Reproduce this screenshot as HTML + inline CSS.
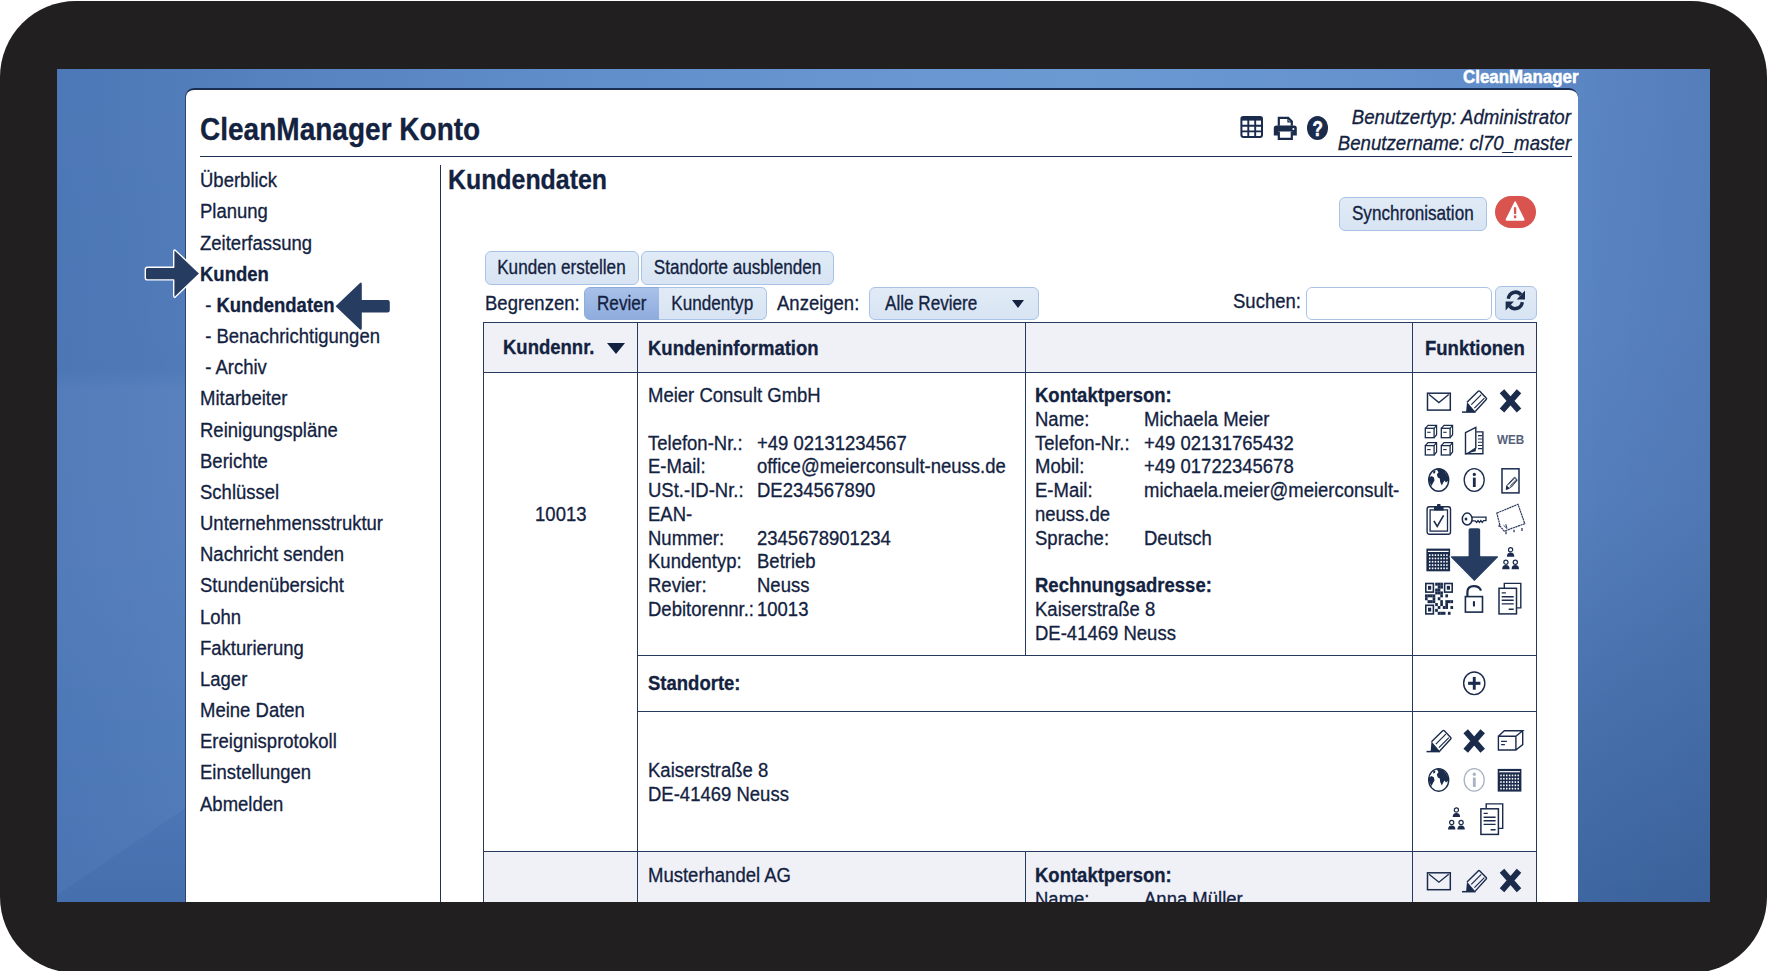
<!DOCTYPE html>
<html lang="de">
<head>
<meta charset="utf-8">
<title>CleanManager Konto – Kundendaten</title>
<style>
html,body{margin:0;padding:0;background:#fff;}
body{width:1767px;height:971px;overflow:hidden;position:relative;font-family:"Liberation Sans",Arial,Helvetica,sans-serif;color:#13223f;font-size:20px;line-height:24px;-webkit-text-stroke-width:.3px;}
#frame{position:absolute;left:0;top:1px;width:1767px;height:972px;background:#221f20;border-radius:76px/76px;}
#screen{position:absolute;left:57px;top:69px;width:1653px;height:833px;overflow:hidden;
 background:linear-gradient(90deg,#4d78b7 0%,#527dbb 8%,#5682c0 13%,#5f8dc9 30%,#6996d0 50%,#6b99d2 62%,#6592cd 80%,#5d89c6 90%,#5985c2 93%,#5782bf 100%);}
#bgl{position:absolute;left:0;top:0;width:130px;height:833px;background:linear-gradient(180deg,rgba(255,255,255,0) 0%,rgba(0,0,40,.02) 36%,rgba(255,255,255,.035) 38.5%,rgba(255,255,255,.03) 60%,rgba(255,255,255,0) 80%,rgba(0,0,60,.04) 100%);}
#bgl i{position:absolute;left:0;top:0;width:130px;height:833px;background:linear-gradient(180deg,#4b75b4 738px,#466fae 833px);clip-path:polygon(0 826px,130px 738px,130px 833px,0 833px);}
#bgr{position:absolute;left:1521px;top:0;width:132px;height:833px;background:linear-gradient(180deg,rgba(43,80,136,0) 0%,rgba(43,80,136,.03) 30%,rgba(43,80,136,.12) 52%,rgba(43,80,136,.36) 75%,rgba(43,80,136,.6) 100%);}
#bgr i{position:absolute;left:0;top:0;right:0;bottom:0;background:linear-gradient(90deg,rgba(255,255,255,.0),rgba(0,0,40,.03));}
#brand{position:absolute;left:1406px;top:-2.5px;-webkit-text-stroke-width:.5px;width:118px;color:#fff;font-weight:bold;font-size:17.8px;line-height:20px;white-space:nowrap;}
#panel{position:absolute;left:128.3px;top:19px;width:1393.2px;height:900px;background:#fff;border-radius:9px 9px 0 0;border-top:2px solid #1a2d52;border-left:1px solid #2c4473;box-sizing:border-box;}
#app{position:absolute;left:-57px;top:-69px;width:1767px;height:971px;}
.a{position:absolute;white-space:nowrap;}
.btn.on{background:linear-gradient(180deg,#a9c1e8,#8facde);border-color:#8facde;}
.t{display:inline-block;transform:scale(.925,1.05);transform-origin:0 50%;white-space:nowrap;}
.tr{display:inline-block;transform:scale(.925,1.05);transform-origin:100% 50%;white-space:nowrap;}
.tc{display:inline-block;transform:scale(.925,1.05);transform-origin:50% 50%;white-space:nowrap;}
b,.b{font-weight:bold;}
.line{position:absolute;background:#1f3156;}
.btn{position:absolute;box-sizing:border-box;border:1px solid #a9c3e6;border-radius:6px;background:linear-gradient(180deg,#e1ebf7,#d8e4f3);text-align:center;font-size:18.5px;line-height:32px;white-space:nowrap;}
</style>
</head>
<body>
<div id="frame"></div>
<div id="screen"><div id="bgl"><i></i></div><div id="bgr"><i></i></div>
<div id="brand"><span class="t" style="transform:scale(.95,1.05)">CleanManager</span></div>
<div id="panel"></div>
<div id="app">
<div class="a" id="title" style="left:199.6px;top:111.8px;font-size:30px;line-height:36px;font-weight:bold"><span class="t" style="transform:scale(.934,1.05)">CleanManager Konto</span></div>
<div class="a" style="right:196px;top:105.2px;text-align:right;font-style:italic;line-height:25.6px"><span class="tr" style="transform:scale(.933,1.05)">Benutzertyp: Administrator</span><br><span class="tr" style="transform:scale(.933,1.05)">Benutzername: cl70_master</span></div>
<div class="line" style="left:200px;top:156px;width:1372px;height:1px"></div>
<div class="line" style="left:440px;top:165px;width:1px;height:740px"></div>
<div class="a" id="side" style="left:200px;top:165.2px;line-height:31.178px"><div><span class="t">Überblick</span></div><div><span class="t">Planung</span></div><div><span class="t">Zeiterfassung</span></div><div><span class="t"><b>Kunden</b></span></div><div><span class="t">&nbsp;- <b>Kundendaten</b></span></div><div><span class="t">&nbsp;- Benachrichtigungen</span></div><div><span class="t">&nbsp;- Archiv</span></div><div><span class="t">Mitarbeiter</span></div><div><span class="t">Reinigungspläne</span></div><div><span class="t">Berichte</span></div><div><span class="t">Schlüssel</span></div><div><span class="t">Unternehmensstruktur</span></div><div><span class="t">Nachricht senden</span></div><div><span class="t">Stundenübersicht</span></div><div><span class="t">Lohn</span></div><div><span class="t">Fakturierung</span></div><div><span class="t">Lager</span></div><div><span class="t">Meine Daten</span></div><div><span class="t">Ereignisprotokoll</span></div><div><span class="t">Einstellungen</span></div><div><span class="t">Abmelden</span></div></div>
<div class="a" style="left:447.9px;top:163.6px;font-size:27px;line-height:32px;font-weight:bold"><span class="t" style="transform:scale(.9215,1.05)">Kundendaten</span></div>
<div class="btn " style="left:1339px;top:196.5px;width:148px;height:34.5px;line-height:32.5px;"><span class="tc">Synchronisation</span></div>
<div class="a" id="alert" style="left:1495px;top:196.1px;width:41px;height:32.2px;border-radius:16px;background:#d9534f"></div>
<div class="btn " style="left:485px;top:251px;width:153.5px;height:33.5px;line-height:31.5px;"><span class="tc">Kunden erstellen</span></div>
<div class="btn " style="left:641px;top:251px;width:193px;height:33.5px;line-height:31.5px;"><span class="tc">Standorte ausblenden</span></div>
<div class="a" style="left:485px;top:291px;"><span class="t">Begrenzen:</span></div>
<div class="btn on" style="left:584px;top:286.5px;width:76px;height:33.5px;line-height:31.5px;border-radius:6px 0 0 6px;"><span class="tc">Revier</span></div>
<div class="btn " style="left:659px;top:286.5px;width:107.5px;height:33.5px;line-height:31.5px;border-radius:0 6px 6px 0;border-left:none;"><span class="tc">Kundentyp</span></div>
<div class="a" style="left:777px;top:291px;"><span class="t">Anzeigen:</span></div>
<div class="btn" style="left:869px;top:286.5px;width:170px;height:33.5px;line-height:31px;text-align:left;padding-left:15px"><span class="t">Alle Reviere</span></div>
<div class="a" style="left:1012px;top:299.7px;width:0;height:0;border-left:6.5px solid transparent;border-right:6.5px solid transparent;border-top:8px solid #13223f"></div>
<div class="a" style="left:1233px;top:289px;"><span class="t">Suchen:</span></div>
<div class="a" style="left:1305.5px;top:286.5px;width:186px;height:33.5px;box-sizing:border-box;border:1px solid #a9c3e6;border-radius:6px;background:#fff"></div>
<div class="btn " style="left:1495px;top:286px;width:41.5px;height:34px;line-height:32px;"><span class="tc"></span></div>
<div class="a" style="left:482.7px;top:322px;width:1054.3px;height:49.89999999999998px;background:#f0f0f7"></div>
<div class="a" style="left:482.7px;top:851.1px;width:1054.3px;height:53.89999999999998px;background:#f0f0f7"></div>
<div class="a" style="left:482.7px;top:321.9px;width:1054.3px;height:1.2px;background:#263a5e"></div>
<div class="a" style="left:482.7px;top:371.79999999999995px;width:1054.3px;height:1.2px;background:#263a5e"></div>
<div class="a" style="left:637.2px;top:654.6px;width:899.8px;height:1.2px;background:#263a5e"></div>
<div class="a" style="left:637.2px;top:710.8px;width:899.8px;height:1.2px;background:#263a5e"></div>
<div class="a" style="left:482.7px;top:851.0px;width:1054.3px;height:1.2px;background:#263a5e"></div>
<div class="a" style="left:482.59999999999997px;top:322px;width:1.2px;height:583px;background:#263a5e"></div>
<div class="a" style="left:637.1px;top:322px;width:1.2px;height:583px;background:#263a5e"></div>
<div class="a" style="left:1535.9px;top:322px;width:1.2px;height:583px;background:#263a5e"></div>
<div class="a" style="left:1411.8000000000002px;top:322px;width:1.2px;height:583px;background:#263a5e"></div>
<div class="a" style="left:1024.8000000000002px;top:322px;width:1.2px;height:332.70000000000005px;background:#263a5e"></div>
<div class="a" style="left:1024.8000000000002px;top:851.1px;width:1.2px;height:53.89999999999998px;background:#263a5e"></div>
<div class="a" style="left:503px;top:334.5px;font-weight:bold"><span class="t">Kundennr.</span></div>
<div class="a" style="left:607px;top:343px;width:0;height:0;border-left:9.5px solid transparent;border-right:9.5px solid transparent;border-top:11px solid #13223f"></div>
<div class="a" style="left:647.6px;top:336px;font-weight:bold"><span class="t">Kundeninformation</span></div>
<div class="a" style="left:1424.5px;top:336px;font-weight:bold"><span class="t">Funktionen</span></div>
<div class="a" style="left:483px;top:502px;width:155px;text-align:center"><span class="tc">10013</span></div>
<div class="a" style="left:647.6px;top:383.0px;"><span class="t">Meier Consult GmbH</span></div>
<div class="a" style="left:647.6px;top:430.5px;"><span class="t">Telefon-Nr.:</span></div>
<div class="a" style="left:757px;top:430.5px;"><span class="t">+49 02131234567</span></div>
<div class="a" style="left:647.6px;top:454.25px;"><span class="t">E-Mail:</span></div>
<div class="a" style="left:757px;top:454.25px;"><span class="t">office@meierconsult-neuss.de</span></div>
<div class="a" style="left:647.6px;top:478.0px;"><span class="t">USt.-ID-Nr.:</span></div>
<div class="a" style="left:757px;top:478.0px;"><span class="t">DE234567890</span></div>
<div class="a" style="left:647.6px;top:501.75px;"><span class="t">EAN-</span></div>
<div class="a" style="left:647.6px;top:525.5px;"><span class="t">Nummer:</span></div>
<div class="a" style="left:757px;top:525.5px;"><span class="t">2345678901234</span></div>
<div class="a" style="left:647.6px;top:549.25px;"><span class="t">Kundentyp:</span></div>
<div class="a" style="left:757px;top:549.25px;"><span class="t">Betrieb</span></div>
<div class="a" style="left:647.6px;top:573.0px;"><span class="t">Revier:</span></div>
<div class="a" style="left:757px;top:573.0px;"><span class="t">Neuss</span></div>
<div class="a" style="left:647.6px;top:596.75px;"><span class="t">Debitorennr.:</span></div>
<div class="a" style="left:757px;top:596.75px;"><span class="t">10013</span></div>
<div class="a" style="left:1035px;top:383.0px;"><span class="t"><b>Kontaktperson:</b></span></div>
<div class="a" style="left:1035px;top:406.75px;"><span class="t">Name:</span></div>
<div class="a" style="left:1144px;top:406.75px;"><span class="t">Michaela Meier</span></div>
<div class="a" style="left:1035px;top:430.5px;"><span class="t">Telefon-Nr.:</span></div>
<div class="a" style="left:1144px;top:430.5px;"><span class="t">+49 02131765432</span></div>
<div class="a" style="left:1035px;top:454.25px;"><span class="t">Mobil:</span></div>
<div class="a" style="left:1144px;top:454.25px;"><span class="t">+49 01722345678</span></div>
<div class="a" style="left:1035px;top:478.0px;"><span class="t">E-Mail:</span></div>
<div class="a" style="left:1144px;top:478.0px;"><span class="t">michaela.meier@meierconsult-</span></div>
<div class="a" style="left:1035px;top:501.75px;"><span class="t">neuss.de</span></div>
<div class="a" style="left:1035px;top:525.5px;"><span class="t">Sprache:</span></div>
<div class="a" style="left:1144px;top:525.5px;"><span class="t">Deutsch</span></div>
<div class="a" style="left:1035px;top:573.0px;"><span class="t"><b>Rechnungsadresse:</b></span></div>
<div class="a" style="left:1035px;top:596.75px;"><span class="t">Kaiserstraße 8</span></div>
<div class="a" style="left:1035px;top:620.5px;"><span class="t">DE-41469 Neuss</span></div>
<div class="a" style="left:647.6px;top:671.3px;"><span class="t"><b>Standorte:</b></span></div>
<div class="a" style="left:647.6px;top:758px;"><span class="t">Kaiserstraße 8</span></div>
<div class="a" style="left:647.6px;top:782px;"><span class="t">DE-41469 Neuss</span></div>
<div class="a" style="left:647.6px;top:863.2px;"><span class="t">Musterhandel AG</span></div>
<div class="a" style="left:1035px;top:863.2px;"><span class="t"><b>Kontaktperson:</b></span></div>
<div class="a" style="left:1035px;top:886.95px;"><span class="t">Name:</span></div>
<div class="a" style="left:1144px;top:886.95px;"><span class="t">Anna Müller</span></div>
<svg class="a" style="left:0;top:0" width="1767" height="971" viewBox="0 0 1767 971" fill="none" stroke="#1a2b4c"><g transform="translate(1240.4 116.5)" ><rect x="1" y=".6" width="20.6" height="19.8" rx="1.8" fill="none" stroke-width="2"/><path d="M1 2.4H21.6" stroke-width="3.4"/><path d="M1 9.2H21.6M1 14.9H21.6M7.9 3V20.4M14.8 3V20.4" stroke-width="1.9"/></g><g transform="translate(1273.8 116.8)" ><path d="M5 9V1H14.4L18 4.6V9" fill="none" stroke-width="2.2"/><path d="M14.2 1V5H18" fill="none" stroke-width="1.3"/><path d="M2.6 8.6H20.4Q23 8.6 23 11.2V18.6H18.6V14.6H4.4V18.6H0V11.2Q0 8.6 2.6 8.6Z" stroke="none" fill="#1a2b4c"/><path d="M5 14.6V22H18V14.6" fill="none" stroke-width="2.2"/><circle cx="19.6" cy="12.2" r="1" fill="#fff" stroke="none"/></g><g transform="translate(1307.0 116.0)" ><ellipse cx="10.5" cy="12" rx="10.5" ry="12" stroke="none" fill="#1a2b4c"/><text transform="translate(10.6 19.6) scale(.92 1.22)" x="0" y="0" text-anchor="middle" font-family="Liberation Sans, Arial, sans-serif" font-weight="bold" font-size="18.5" fill="#fff" stroke="#fff" stroke-width=".5">?</text></g><g transform="translate(1505.3 200.7) scale(.9 1.05)" ><g transform="translate(0.0 0.0)" ><path d="M10 1.2Q10.9 -.2 11.8 1.2L21.2 17.4Q22 19 20.2 19H1.6Q-.2 19 .6 17.4Z" fill="#fff" stroke="none"/><rect x="9.6" y="6.2" width="2.6" height="6.4" fill="#d9534f" stroke="none"/><rect x="9.6" y="14" width="2.6" height="2.7" fill="#d9534f" stroke="none"/></g></g><g transform="translate(1505.2 289.3) scale(1.01 1.1)" ><g transform="translate(0.0 0.0)" ><path d="M3 8.6A7.3 7.3 0 0 1 15.6 5" fill="none" stroke-width="3.3"/><path d="M19.6 1V9.2H11.4Z" stroke="none" fill="#1a2b4c"/><path d="M17 11.6A7.3 7.3 0 0 1 4.4 15.2" fill="none" stroke-width="3.3"/><path d="M.4 19.2V11H8.6Z" stroke="none" fill="#1a2b4c"/></g></g><g transform="translate(1426.7 392.4)" ><rect x=".8" y=".8" width="22.8" height="16.9" fill="none" stroke-width="1.5"/><path d="M2.4 2.2L12.2 10.2L22 2.2" fill="none" stroke-width="1.3"/></g><g transform="translate(1462.0 390.5)" ><path d="M5 11.8L16.2.8Q17 0 17.8.8L24.2 7.4Q25 8.2 24.2 9L13.2 21" fill="none" stroke-width="1.4"/><path d="M5 11.6L4.1 21.6H13.6Z" stroke="none" fill="#1a2b4c"/><path d="M0 21.6H13.6" stroke-width="1.5"/><path d="M9.3 14.2L19.3 4.2M12.4 17.6L22.4 7.6" stroke-width="1.2"/></g><g transform="translate(1499.7 388.9)" ><path d="M2.3 2.3L19.3 21.7M19.3 2.3L2.3 21.7" stroke-width="6"/></g><g transform="translate(1426.7 872.0)" ><rect x=".8" y=".8" width="22.8" height="16.9" fill="none" stroke-width="1.5"/><path d="M2.4 2.2L12.2 10.2L22 2.2" fill="none" stroke-width="1.3"/></g><g transform="translate(1462.0 870.1)" ><path d="M5 11.8L16.2.8Q17 0 17.8.8L24.2 7.4Q25 8.2 24.2 9L13.2 21" fill="none" stroke-width="1.4"/><path d="M5 11.6L4.1 21.6H13.6Z" stroke="none" fill="#1a2b4c"/><path d="M0 21.6H13.6" stroke-width="1.5"/><path d="M9.3 14.2L19.3 4.2M12.4 17.6L22.4 7.6" stroke-width="1.2"/></g><g transform="translate(1499.7 868.5)" ><path d="M2.3 2.3L19.3 21.7M19.3 2.3L2.3 21.7" stroke-width="6"/></g><g transform="translate(1424.6 424.7)" ><g transform="translate(0.0 0.0)" ><rect x=".7" y="3.6" width="8.8" height="9.4" fill="none" stroke-width="1.3"/><path d="M.7 3.6L3.4.7H12V10L9.5 13M9.5 3.6L12 .7" fill="none" stroke-width="1.2"/><path d="M2.6 7.6H6" stroke-width="1.1"/></g><g transform="translate(16.0 0.0)" ><rect x=".7" y="3.6" width="8.8" height="9.4" fill="none" stroke-width="1.3"/><path d="M.7 3.6L3.4.7H12V10L9.5 13M9.5 3.6L12 .7" fill="none" stroke-width="1.2"/><path d="M2.6 7.6H6" stroke-width="1.1"/></g><g transform="translate(0.0 17.3)" ><rect x=".7" y="3.6" width="8.8" height="9.4" fill="none" stroke-width="1.3"/><path d="M.7 3.6L3.4.7H12V10L9.5 13M9.5 3.6L12 .7" fill="none" stroke-width="1.2"/><path d="M2.6 7.6H6" stroke-width="1.1"/></g><g transform="translate(16.0 17.3)" ><rect x=".7" y="3.6" width="8.8" height="9.4" fill="none" stroke-width="1.3"/><path d="M.7 3.6L3.4.7H12V10L9.5 13M9.5 3.6L12 .7" fill="none" stroke-width="1.2"/><path d="M2.6 7.6H6" stroke-width="1.1"/></g></g><g transform="translate(1464.8 426.7)" ><path d="M.7 5.9L11 .6V21.3L3.8 26.2L.7 27.1Z" fill="none" stroke-width="1.4"/><path d="M11.4 5.2H18.1V27.1H.7" fill="none" stroke-width="1.4"/><path d="M13.2 8.9H17.4M13.2 12.3H17.4M13.2 15.6H17.4M13.2 18.8H17.4M13.2 21.9H17.4" stroke-width="1.1"/><path d="M3.8 26.4L11 21.3V24.5Z" stroke="none" fill="#1a2b4c"/></g><g transform="translate(1428.0 468.0)" ><ellipse cx="10.7" cy="12" rx="10" ry="11.3" fill="none" stroke-width="1.4"/><path d="M8.5 1.2Q12 .6 15.5 2.3L17.8 5.2L20 8.5L20.3 12.5L18 14.5L16.5 12.5L15 15L13.8 17.5L12.2 14L11.8 10.5L9.8 9.5L8.8 6.5L10.5 4.2Z" stroke="none" fill="#1a2b4c"/><path d="M1.2 9.5L3.5 8L6 9.5L6.5 12.5L5 15L3.5 18L2 15.5L.9 12.5Z" stroke="none" fill="#1a2b4c"/><path d="M5.5 3.2L7.5 2.5L7 5.2L5 5.5Z" stroke="none" fill="#1a2b4c"/></g><g transform="translate(1463.5 468.0)" stroke="#1a2b4c"><ellipse cx="10.7" cy="12" rx="10" ry="11.3" fill="none" stroke-width="1.3"/><ellipse cx="10.8" cy="6.4" rx="1.6" ry="1.7" stroke="none" fill="#1a2b4c"/><rect x="9.4" y="9.6" width="2.8" height="9.4" stroke="none" fill="#1a2b4c"/></g><g transform="translate(1501.2 468.0)" ><rect x=".8" y=".8" width="17" height="24.1" fill="none" stroke-width="1.5"/><path d="M5 21.5L5.6 17.6L13.2 9.2L16 11.8L8.4 20.2Z" fill="none" stroke-width="1"/><path d="M5 21.5L5.6 17.6L8.4 20.2Z" stroke="none" fill="#1a2b4c"/><path d="M7.4 16.6L14.2 9.4M8.8 18.2L15.4 10.8M10 19.4L16 12.4" stroke-width=".7"/></g><g transform="translate(1426.4 504.1)" ><rect x=".7" y="2.6" width="23.4" height="27.5" rx="2.2" fill="none" stroke-width="1.4"/><rect x="3.7" y="5.8" width="17.4" height="21.2" fill="none" stroke-width="1.3"/><path d="M7.6 6.5V3.2Q7.6 2.2 8.6 2.2H10.6V.9Q10.6 0 11.5 0H13.3Q14.2 0 14.2 .9V2.2H16.2Q17.2 2.2 17.2 3.2V6.5Z" stroke="none" fill="#1a2b4c"/><path d="M7.5 16.8L10.8 22.4L17.2 11.2" fill="none" stroke-width="1.6"/></g><g transform="translate(1461.6 512.4)" ><ellipse cx="5.6" cy="6.7" rx="4.9" ry="6" fill="none" stroke-width="1.5"/><ellipse cx="4.4" cy="6.7" rx="1.4" ry="1.5" stroke="none" fill="#1a2b4c"/><path d="M10.3 4.8H24.4V8.2H22L20.6 10L19.2 8.2L17.8 10L16.4 8.2L15 10L13.6 8.4H10.3" fill="none" stroke-width="1.3"/></g><g transform="translate(1496.0 503.7)" stroke="#2c3d5e"><path d="M.8 9.4L22 .6L28.8 20L8.2 27.4L4.2 22.6Z" fill="none" stroke-width="1.2" stroke-dasharray="2.2 .5"/><path d="M7.5 21.5L11 24.8L9.8 20.4" fill="none" stroke-width="1"/><path d="M10 27.6V30.6M18 26V28.6M26 24.4V27.2M3.2 21V23.4" stroke-width="1.3"/></g><g transform="translate(1426.4 548.6)" ><rect x="0" y="0" width="23.7" height="22.7" stroke="none" fill="#1a2b4c"/><g fill="#fff" stroke="none"><rect x="1.5" y="2.2" width="20.7" height="1.2"/><rect x="2.55" y="5.70" width="1.5" height="1.7"/><rect x="2.55" y="9.00" width="1.5" height="1.7"/><rect x="2.55" y="12.30" width="1.5" height="1.7"/><rect x="2.55" y="15.60" width="1.5" height="1.7"/><rect x="2.55" y="18.90" width="1.5" height="1.7"/><rect x="5.42" y="5.70" width="1.5" height="1.7"/><rect x="5.42" y="9.00" width="1.5" height="1.7"/><rect x="5.42" y="12.30" width="1.5" height="1.7"/><rect x="5.42" y="15.60" width="1.5" height="1.7"/><rect x="5.42" y="18.90" width="1.5" height="1.7"/><rect x="8.29" y="5.70" width="1.5" height="1.7"/><rect x="8.29" y="9.00" width="1.5" height="1.7"/><rect x="8.29" y="12.30" width="1.5" height="1.7"/><rect x="8.29" y="15.60" width="1.5" height="1.7"/><rect x="8.29" y="18.90" width="1.5" height="1.7"/><rect x="11.16" y="5.70" width="1.5" height="1.7"/><rect x="11.16" y="9.00" width="1.5" height="1.7"/><rect x="11.16" y="12.30" width="1.5" height="1.7"/><rect x="11.16" y="15.60" width="1.5" height="1.7"/><rect x="11.16" y="18.90" width="1.5" height="1.7"/><rect x="14.03" y="5.70" width="1.5" height="1.7"/><rect x="14.03" y="9.00" width="1.5" height="1.7"/><rect x="14.03" y="12.30" width="1.5" height="1.7"/><rect x="14.03" y="15.60" width="1.5" height="1.7"/><rect x="14.03" y="18.90" width="1.5" height="1.7"/><rect x="16.90" y="5.70" width="1.5" height="1.7"/><rect x="16.90" y="9.00" width="1.5" height="1.7"/><rect x="16.90" y="12.30" width="1.5" height="1.7"/><rect x="16.90" y="15.60" width="1.5" height="1.7"/><rect x="16.90" y="18.90" width="1.5" height="1.7"/><rect x="19.77" y="5.70" width="1.5" height="1.7"/><rect x="19.77" y="9.00" width="1.5" height="1.7"/><rect x="19.77" y="12.30" width="1.5" height="1.7"/><rect x="19.77" y="15.60" width="1.5" height="1.7"/><rect x="19.77" y="18.90" width="1.5" height="1.7"/></g></g><g transform="translate(1502.0 547.0)" ><circle cx="8.6" cy="2.7" r="2.1" fill="none" stroke-width="1.2"/><path d="M4.8999999999999995 9.8Q4.8999999999999995 5.6 8.6 5.6Q12.3 5.6 12.3 9.8Z" stroke="none" fill="#1a2b4c"/><circle cx="3.9" cy="15.2" r="2.1" fill="none" stroke-width="1.2"/><path d="M0.19999999999999973 22.3Q0.19999999999999973 18.1 3.9 18.1Q7.6 18.1 7.6 22.3Z" stroke="none" fill="#1a2b4c"/><circle cx="13.3" cy="15.2" r="2.1" fill="none" stroke-width="1.2"/><path d="M9.600000000000001 22.3Q9.600000000000001 18.1 13.3 18.1Q17.0 18.1 17.0 22.3Z" stroke="none" fill="#1a2b4c"/></g><g transform="translate(1425.0 582.7)" ><g stroke="none" fill="#1a2b4c"><rect x="0.8" y="0.8" width="7.6" height="8.6" fill="none" stroke-width="1.6" stroke="#1a2b4c"/><rect x="3" y="3.2" width="3.2" height="3.8"/><rect x="19.6" y="0.8" width="7.6" height="8.6" fill="none" stroke-width="1.6" stroke="#1a2b4c"/><rect x="21.8" y="3.2" width="3.2" height="3.8"/><rect x="0.8" y="22.6" width="7.6" height="8.6" fill="none" stroke-width="1.6" stroke="#1a2b4c"/><rect x="3" y="25.0" width="3.2" height="3.8"/><rect x="0.00" y="11.64" width="2.65" height="3.01"/><rect x="0.00" y="14.55" width="2.65" height="3.01"/><rect x="2.55" y="11.64" width="2.65" height="3.01"/><rect x="2.55" y="17.45" width="2.65" height="3.01"/><rect x="5.09" y="11.64" width="2.65" height="3.01"/><rect x="5.09" y="17.45" width="2.65" height="3.01"/><rect x="7.64" y="11.64" width="2.65" height="3.01"/><rect x="7.64" y="14.55" width="2.65" height="3.01"/><rect x="7.64" y="17.45" width="2.65" height="3.01"/><rect x="10.18" y="0.00" width="2.65" height="3.01"/><rect x="10.18" y="5.82" width="2.65" height="3.01"/><rect x="10.18" y="8.73" width="2.65" height="3.01"/><rect x="10.18" y="20.36" width="2.65" height="3.01"/><rect x="10.18" y="26.18" width="2.65" height="3.01"/><rect x="12.73" y="0.00" width="2.65" height="3.01"/><rect x="12.73" y="2.91" width="2.65" height="3.01"/><rect x="12.73" y="5.82" width="2.65" height="3.01"/><rect x="12.73" y="8.73" width="2.65" height="3.01"/><rect x="12.73" y="14.55" width="2.65" height="3.01"/><rect x="12.73" y="23.27" width="2.65" height="3.01"/><rect x="12.73" y="29.09" width="2.65" height="3.01"/><rect x="15.27" y="0.00" width="2.65" height="3.01"/><rect x="15.27" y="2.91" width="2.65" height="3.01"/><rect x="15.27" y="8.73" width="2.65" height="3.01"/><rect x="15.27" y="11.64" width="2.65" height="3.01"/><rect x="15.27" y="17.45" width="2.65" height="3.01"/><rect x="15.27" y="20.36" width="2.65" height="3.01"/><rect x="15.27" y="29.09" width="2.65" height="3.01"/><rect x="17.82" y="23.27" width="2.65" height="3.01"/><rect x="17.82" y="29.09" width="2.65" height="3.01"/><rect x="20.36" y="11.64" width="2.65" height="3.01"/><rect x="20.36" y="17.45" width="2.65" height="3.01"/><rect x="20.36" y="20.36" width="2.65" height="3.01"/><rect x="20.36" y="23.27" width="2.65" height="3.01"/><rect x="22.91" y="17.45" width="2.65" height="3.01"/><rect x="22.91" y="29.09" width="2.65" height="3.01"/><rect x="25.45" y="17.45" width="2.65" height="3.01"/><rect x="25.45" y="23.27" width="2.65" height="3.01"/></g></g><g transform="translate(1464.6 585.0)" ><rect x=".8" y="11.6" width="17.1" height="15.5" fill="none" stroke-width="1.6"/><rect x="8.3" y="16" width="2.1" height="5.6" rx=".9" stroke="none" fill="#1a2b4c"/><path d="M2.8 11.4V7Q2.8 1.1 9.3 1.1Q14.8 1.1 16.4 5.6" fill="none" stroke-width="2.2"/></g><g transform="translate(1498.3 582.7)" ><path d="M6 5.2V.7H22.5V25.2H18.4" fill="none" stroke-width="1.4"/><rect x=".7" y="5.6" width="17.5" height="25.6" fill="#fff" stroke-width="1.5"/><path d="M3.4 10.2H7.6M3.4 14H15.4M3.4 17.6H15.4M3.4 21.2H15.4M10.4 26.6H15.4" stroke-width="1.4"/></g><g transform="translate(1474.4 582.0)" ><path d="M0 0L-24 -24.4Q-25 -26.4 -22.6 -26.4H-6.4V-52Q-6.4 -54.4 -4 -54.4H4Q6.4 -54.4 6.4 -52V-26.4H22.6Q25 -26.4 24 -24.4Z" fill="#263d61" stroke="#fff" stroke-width="1.2" stroke-linejoin="round"/></g><g transform="translate(1462.9 671.3)" ><ellipse cx="11.35" cy="12" rx="10.6" ry="11.3" fill="none" stroke-width="1.4"/><path d="M5.2 12H17.5" stroke-width="3.1"/><path d="M11.35 5.6V18.4" stroke-width="2.9"/></g><g transform="translate(1426.5 730.0)" ><path d="M5 11.8L16.2.8Q17 0 17.8.8L24.2 7.4Q25 8.2 24.2 9L13.2 21" fill="none" stroke-width="1.4"/><path d="M5 11.6L4.1 21.6H13.6Z" stroke="none" fill="#1a2b4c"/><path d="M0 21.6H13.6" stroke-width="1.5"/><path d="M9.3 14.2L19.3 4.2M12.4 17.6L22.4 7.6" stroke-width="1.2"/></g><g transform="translate(1463.4 729.0)" ><path d="M2.3 2.3L19.3 21.7M19.3 2.3L2.3 21.7" stroke-width="6"/></g><g transform="translate(1497.7 730.0)" ><path d="M.7 6.2H18.2V20H.7ZM.7 6.2L6.6.7H25L18.2 6.2M25 .7V14.6L18.2 20" fill="none" stroke-width="1.4"/><path d="M3.4 11.4H9.2M3.4 14.6H7.2" stroke-width="1.3"/></g><g transform="translate(1428.0 767.9)" ><ellipse cx="10.7" cy="12" rx="10" ry="11.3" fill="none" stroke-width="1.4"/><path d="M8.5 1.2Q12 .6 15.5 2.3L17.8 5.2L20 8.5L20.3 12.5L18 14.5L16.5 12.5L15 15L13.8 17.5L12.2 14L11.8 10.5L9.8 9.5L8.8 6.5L10.5 4.2Z" stroke="none" fill="#1a2b4c"/><path d="M1.2 9.5L3.5 8L6 9.5L6.5 12.5L5 15L3.5 18L2 15.5L.9 12.5Z" stroke="none" fill="#1a2b4c"/><path d="M5.5 3.2L7.5 2.5L7 5.2L5 5.5Z" stroke="none" fill="#1a2b4c"/></g><g transform="translate(1463.5 767.9)" stroke="#a9b2c3"><ellipse cx="10.7" cy="12" rx="10" ry="11.3" fill="none" stroke-width="1.3"/><ellipse cx="10.8" cy="6.4" rx="1.6" ry="1.7" stroke="none" fill="#a9b2c3"/><rect x="9.4" y="9.6" width="2.8" height="9.4" stroke="none" fill="#a9b2c3"/></g><g transform="translate(1497.7 768.9)" ><rect x="0" y="0" width="23.7" height="22.7" stroke="none" fill="#1a2b4c"/><g fill="#fff" stroke="none"><rect x="1.5" y="2.2" width="20.7" height="1.2"/><rect x="2.55" y="5.70" width="1.5" height="1.7"/><rect x="2.55" y="9.00" width="1.5" height="1.7"/><rect x="2.55" y="12.30" width="1.5" height="1.7"/><rect x="2.55" y="15.60" width="1.5" height="1.7"/><rect x="2.55" y="18.90" width="1.5" height="1.7"/><rect x="5.42" y="5.70" width="1.5" height="1.7"/><rect x="5.42" y="9.00" width="1.5" height="1.7"/><rect x="5.42" y="12.30" width="1.5" height="1.7"/><rect x="5.42" y="15.60" width="1.5" height="1.7"/><rect x="5.42" y="18.90" width="1.5" height="1.7"/><rect x="8.29" y="5.70" width="1.5" height="1.7"/><rect x="8.29" y="9.00" width="1.5" height="1.7"/><rect x="8.29" y="12.30" width="1.5" height="1.7"/><rect x="8.29" y="15.60" width="1.5" height="1.7"/><rect x="8.29" y="18.90" width="1.5" height="1.7"/><rect x="11.16" y="5.70" width="1.5" height="1.7"/><rect x="11.16" y="9.00" width="1.5" height="1.7"/><rect x="11.16" y="12.30" width="1.5" height="1.7"/><rect x="11.16" y="15.60" width="1.5" height="1.7"/><rect x="11.16" y="18.90" width="1.5" height="1.7"/><rect x="14.03" y="5.70" width="1.5" height="1.7"/><rect x="14.03" y="9.00" width="1.5" height="1.7"/><rect x="14.03" y="12.30" width="1.5" height="1.7"/><rect x="14.03" y="15.60" width="1.5" height="1.7"/><rect x="14.03" y="18.90" width="1.5" height="1.7"/><rect x="16.90" y="5.70" width="1.5" height="1.7"/><rect x="16.90" y="9.00" width="1.5" height="1.7"/><rect x="16.90" y="12.30" width="1.5" height="1.7"/><rect x="16.90" y="15.60" width="1.5" height="1.7"/><rect x="16.90" y="18.90" width="1.5" height="1.7"/><rect x="19.77" y="5.70" width="1.5" height="1.7"/><rect x="19.77" y="9.00" width="1.5" height="1.7"/><rect x="19.77" y="12.30" width="1.5" height="1.7"/><rect x="19.77" y="15.60" width="1.5" height="1.7"/><rect x="19.77" y="18.90" width="1.5" height="1.7"/></g></g><g transform="translate(1447.8 807.3)" ><circle cx="8.6" cy="2.7" r="2.1" fill="none" stroke-width="1.2"/><path d="M4.8999999999999995 9.8Q4.8999999999999995 5.6 8.6 5.6Q12.3 5.6 12.3 9.8Z" stroke="none" fill="#1a2b4c"/><circle cx="3.9" cy="15.2" r="2.1" fill="none" stroke-width="1.2"/><path d="M0.19999999999999973 22.3Q0.19999999999999973 18.1 3.9 18.1Q7.6 18.1 7.6 22.3Z" stroke="none" fill="#1a2b4c"/><circle cx="13.3" cy="15.2" r="2.1" fill="none" stroke-width="1.2"/><path d="M9.600000000000001 22.3Q9.600000000000001 18.1 13.3 18.1Q17.0 18.1 17.0 22.3Z" stroke="none" fill="#1a2b4c"/></g><g transform="translate(1480.2 803.2)" ><path d="M6 5.2V.7H22.5V25.2H18.4" fill="none" stroke-width="1.4"/><rect x=".7" y="5.6" width="17.5" height="25.6" fill="#fff" stroke-width="1.5"/><path d="M3.4 10.2H7.6M3.4 14H15.4M3.4 17.6H15.4M3.4 21.2H15.4M10.4 26.6H15.4" stroke-width="1.4"/></g><g transform="translate(199.9 273.6)" ><path d="M0 0L-24.4 -23.2Q-26.2 -24.4 -26.2 -22V-6.3H-52.4Q-54.6 -6.3 -54.6 -4.1V4.1Q-54.6 6.3 -52.4 6.3H-26.2V22Q-26.2 24.4 -24.4 23.2Z" fill="#263d61" stroke="#fff" stroke-width="1.4" stroke-linejoin="round"/></g><g transform="translate(335.6 306.2)" ><path d="M0 0L24.4 -23.2Q26.2 -24.4 26.2 -22V-6.2H52Q54.2 -6.2 54.2 -4V4Q54.2 6.2 52 6.2H26.2V22Q26.2 24.4 24.4 23.2Z" fill="#263d61" stroke="none"/></g></svg>
<div class="a" style="left:1496.5px;top:432.2px;font-size:12.6px;line-height:16px;font-weight:bold;color:#55617c;-webkit-text-stroke:0"><span class="t" style="transform:scaleX(.93)">WEB</span></div>
</div>
<!--endapp-->
</div>
</body>
</html>
